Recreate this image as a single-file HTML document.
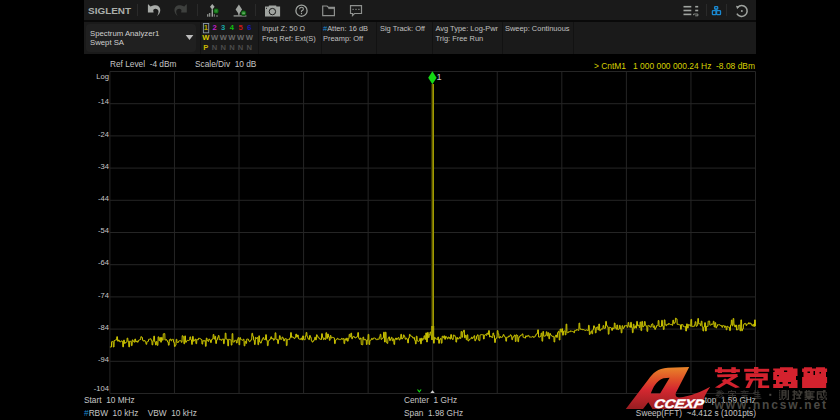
<!DOCTYPE html>
<html><head><meta charset="utf-8">
<style>
*{margin:0;padding:0;box-sizing:border-box}
html,body{width:840px;height:420px;background:#000;overflow:hidden;font-family:"Liberation Sans",sans-serif;position:relative}
.a{position:absolute;white-space:nowrap}
#top{position:absolute;left:84px;top:0;width:672px;height:20px;background:#1a1a1a}
#gap{position:absolute;left:84px;top:20px;width:672px;height:2px;background:#090909}
#row2{position:absolute;left:84px;top:22px;width:672px;height:32px;background:#1a1a1a}
#dd{position:absolute;left:85.5px;top:24px;width:110.5px;height:27.6px;background:#202020;border-radius:4px}
.sep{position:absolute;top:4px;width:1px;height:12px;background:#2a2a2a}
.col{position:absolute;top:22px;width:1px;height:31.5px;background:#121212}
.t8{font-size:7.75px;color:#cfcfcf;line-height:9px}
.i7{font-size:7.45px;color:#c0c0c0;line-height:10.1px}
.dg{font-size:7.6px;font-weight:bold;line-height:9.9px;height:9.9px;width:8.7px;text-align:center;display:inline-block;vertical-align:top}
.dr{height:9.9px;line-height:9.9px}
.yl{font-size:7.6px;color:#c8c8c8;text-align:right;width:30px}
.bt{font-size:8.3px;color:#c6c6c6;line-height:10px}
.mk{font-size:8.45px;color:#d4cf00;line-height:10px}
</style></head><body>
<div id="top"></div><div id="gap"></div>
<div class="sep" style="left:137px"></div>
<div class="sep" style="left:197px"></div>
<div class="sep" style="left:255px"></div>
<div class="sep" style="left:706px"></div>
<div class="sep" style="left:726px"></div>
<div id="row2"></div>
<div id="dd"></div>
<div class="col" style="left:200px"></div>
<div class="col" style="left:258px"></div>
<div class="col" style="left:321px"></div>
<div class="col" style="left:376px"></div>
<div class="col" style="left:432px"></div>
<div class="col" style="left:502px"></div>
<div class="col" style="left:573px"></div>

<!-- logo -->
<div class="a" style="left:88.4px;top:4.5px;font-size:9.3px;line-height:12px;font-weight:bold;color:#aaaeaa;transform:scaleX(1.07);transform-origin:0 0">SIGLENT</div>

<svg class="a" style="left:0;top:0" width="840" height="420" viewBox="0 0 840 420">
 <!-- undo -->
 <path fill="#a8aba8" d="M148.3 4.3 L150.4 6.4 C152.5 5.5 154.5 5.1 156 5.2 C158.8 5.5 160.4 7.8 160.3 10.3 C160.2 12.5 159 14.5 157.1 16.2 C158.1 14.2 158.8 12.2 158.4 10.8 C157.9 9.4 156.6 8.7 155.2 8.8 C154.3 8.9 153.6 9.4 153.2 10.1 L153.6 12.6 L147.9 12.6 L147.9 4.8 Z"/>
 <!-- redo -->
 <g transform="translate(334.7,0) scale(-1,1)"><path fill="#3e403e" d="M148.3 4.3 L150.4 6.4 C152.5 5.5 154.5 5.1 156 5.2 C158.8 5.5 160.4 7.8 160.3 10.3 C160.2 12.5 159 14.5 157.1 16.2 C158.1 14.2 158.8 12.2 158.4 10.8 C157.9 9.4 156.6 8.7 155.2 8.8 C154.3 8.9 153.6 9.4 153.2 10.1 L153.6 12.6 L147.9 12.6 L147.9 4.8 Z"/></g>
 <!-- peak icon 1 -->
 <path d="M212.3 3.9 L214.6 6.75 L212.3 9.7 L210 6.75 Z" fill="#a8aca8"/>
 <rect x="211.6" y="9.3" width="1.4" height="7.4" fill="#a0a4a0"/>
 <rect x="207" y="14.2" width="1.4" height="2.5" fill="#8a8e8a"/>
 <rect x="208.9" y="13" width="1.4" height="3.7" fill="#8a8e8a"/>
 <rect x="213.8" y="14.2" width="1.1" height="2.5" fill="#7a7e7a"/>
 <rect x="216" y="15.3" width="2" height="1.4" fill="#6a6e6a"/>
 <circle cx="216.1" cy="10.95" r="2.9" fill="#0e3a0e"/>
 <circle cx="216.1" cy="10.95" r="2.3" fill="#1a7a1e"/>
 <circle cx="216.1" cy="10.95" r="0.9" fill="#3a9a3e"/>
 <!-- peak icon 2 -->
 <path d="M238.9 4.6 L242.1 9.4 L238.9 14.3 L235.6 9.4 Z" fill="#a0a4a0"/>
 <rect x="238.3" y="13" width="1.2" height="2.5" fill="#a0a4a0"/>
 <rect x="233.6" y="15.2" width="12.8" height="1.4" fill="#8a8e8a"/>
 <circle cx="243.6" cy="13.1" r="2.9" fill="#0e3a0e"/><circle cx="243.6" cy="13.1" r="2.3" fill="#1a7a1e"/>
 <rect x="242.3" y="12.7" width="2.6" height="0.8" fill="#a8d8a8"/>
 <!-- camera -->
 <path d="M265 6.6 L268.7 6.6 L268.9 5.4 L276.2 5.4 L276.4 6.6 L280.1 6.6 L280.1 16.6 L265 16.6 Z" fill="#a0a4a0"/>
 <circle cx="272.4" cy="11.6" r="3.2" fill="none" stroke="#1b1b1b" stroke-width="1"/>
 <rect x="266" y="7.8" width="1" height="1" fill="#1b1b1b"/>
 <!-- help -->
 <circle cx="301.5" cy="10.7" r="5.6" fill="none" stroke="#a0a4a0" stroke-width="1.3"/>
 <path d="M299.6 9.2 Q299.6 7.3 301.5 7.3 Q303.4 7.3 303.4 9 Q303.4 10.2 301.5 10.9 L301.5 12.3" fill="none" stroke="#a0a4a0" stroke-width="1.1"/>
 <rect x="300.9" y="13" width="1.2" height="1.2" fill="#a0a4a0"/>
 <!-- folder -->
 <path d="M322.7 6 L327 6 L328.5 7.4 L334.4 7.4 L334.4 15.7 L322.7 15.7 Z" fill="none" stroke="#8e908e" stroke-width="1.2"/>
 <path d="M328.3 8.6 L334.4 8.6" stroke="#8e908e" stroke-width="1"/>
 <!-- chat -->
 <path d="M350.5 5.7 L361.5 5.7 L361.5 13.5 L354.5 13.5 L352.5 15.5 L352.5 13.5 L350.5 13.5 Z" fill="none" stroke="#8e908e" stroke-width="1.2"/>
 <rect x="352.5" y="8.8" width="1.2" height="1.2" fill="#8e908e"/>
 <rect x="355.4" y="8.8" width="1.2" height="1.2" fill="#8e908e"/>
 <rect x="358.3" y="8.8" width="1.2" height="1.2" fill="#8e908e"/>
 <!-- list icon -->
 <rect x="683.5" y="5.9" width="7.8" height="1.6" fill="#a0a4a0"/>
 <rect x="683.5" y="9.7" width="7.8" height="1.6" fill="#a0a4a0"/>
 <rect x="683.5" y="13.6" width="7.8" height="1.6" fill="#a0a4a0"/>
 <rect x="695.2" y="5.9" width="3" height="1.6" fill="#a0a4a0"/>
 <rect x="695.2" y="9.7" width="3" height="1.6" fill="#a0a4a0"/>
 <path d="M693.6 15.2 L693.6 14 L697.9 14 L697.9 15.8 L695.2 15.8" fill="none" stroke="#a0a4a0" stroke-width="0.8"/>
 <!-- network -->
 <rect x="714.6" y="6.6" width="3.1" height="2.4" rx="0.6" fill="none" stroke="#1a88d0" stroke-width="1.3"/>
 <path d="M716.15 9 L716.15 10.8" stroke="#1a88d0" stroke-width="1.3"/>
 <rect x="712.4" y="10.7" width="3.6" height="4" rx="0.6" fill="none" stroke="#1a88d0" stroke-width="1.3"/>
 <rect x="716.6" y="10.7" width="3.9" height="4" rx="0.6" fill="none" stroke="#1a88d0" stroke-width="1.3"/>
 <!-- refresh -->
 <path d="M736.9 13.6 A5.45 5.45 0 1 0 737.6 7.4" fill="none" stroke="#a0a4a0" stroke-width="1.5"/>
 <path d="M736 5.8 L739.2 6.6 L737.2 9.2 Z" fill="#a0a4a0"/>
 <circle cx="741.85" cy="11" r="0.95" fill="#a0a4a0"/>
 <!-- dropdown triangle -->
 <path d="M185.7 35 L193.3 35 L189.5 40 Z" fill="#bdbdbd"/>
 <!-- trace 1 box -->
 <rect x="203.4" y="23.5" width="5.3" height="9.3" fill="none" stroke="#8a9aa8" stroke-width="0.9"/>

 <!-- graticule -->
 <g stroke="#252525" stroke-width="1">
 <line x1="109.90" y1="71.5" x2="109.90" y2="393.5"/>
<line x1="174.46" y1="71.5" x2="174.46" y2="393.5"/>
<line x1="239.02" y1="71.5" x2="239.02" y2="393.5"/>
<line x1="303.58" y1="71.5" x2="303.58" y2="393.5"/>
<line x1="368.14" y1="71.5" x2="368.14" y2="393.5"/>
<line x1="432.70" y1="71.5" x2="432.70" y2="393.5"/>
<line x1="497.26" y1="71.5" x2="497.26" y2="393.5"/>
<line x1="561.82" y1="71.5" x2="561.82" y2="393.5"/>
<line x1="626.38" y1="71.5" x2="626.38" y2="393.5"/>
<line x1="690.94" y1="71.5" x2="690.94" y2="393.5"/>
<line x1="755.50" y1="71.5" x2="755.50" y2="393.5"/>
<line x1="109.9" y1="71.50" x2="755.5" y2="71.50"/>
<line x1="109.9" y1="103.70" x2="755.5" y2="103.70"/>
<line x1="109.9" y1="135.90" x2="755.5" y2="135.90"/>
<line x1="109.9" y1="168.10" x2="755.5" y2="168.10"/>
<line x1="109.9" y1="200.30" x2="755.5" y2="200.30"/>
<line x1="109.9" y1="232.50" x2="755.5" y2="232.50"/>
<line x1="109.9" y1="264.70" x2="755.5" y2="264.70"/>
<line x1="109.9" y1="296.90" x2="755.5" y2="296.90"/>
<line x1="109.9" y1="329.10" x2="755.5" y2="329.10"/>
<line x1="109.9" y1="361.30" x2="755.5" y2="361.30"/>
<line x1="109.9" y1="393.50" x2="755.5" y2="393.50"/>
 </g>
 <path d="M109.90 347.0L110.56 347.0L110.76 347.0L111.42 347.0L111.62 341.7L112.28 341.7L112.48 341.4L113.14 341.4L113.34 347.0L114.00 347.0L114.20 340.5L114.86 340.5L115.06 340.0L115.73 340.0L115.93 340.0L116.59 340.0L116.79 336.7L117.45 336.7L117.65 341.2L118.31 341.2L118.51 340.0L119.17 340.0L119.37 341.6L120.03 341.6L120.23 341.9L120.89 341.9L121.09 340.9L121.75 340.9L121.95 341.3L122.61 341.3L122.81 346.9L123.47 346.9L123.67 340.1L124.33 340.1L124.53 343.5L125.19 343.5L125.39 342.5L126.06 342.5L126.26 342.2L126.92 342.2L127.12 338.1L127.78 338.1L127.98 341.3L128.64 341.3L128.84 346.9L129.50 346.9L129.70 341.1L130.36 341.1L130.56 341.4L131.22 341.4L131.42 345.6L132.08 345.6L132.28 339.9L132.94 339.9L133.14 341.3L133.80 341.3L134.00 342.2L134.66 342.2L134.86 339.0L135.52 339.0L135.72 341.9L136.38 341.9L136.58 341.0L137.25 341.0L137.45 342.2L138.11 342.2L138.31 340.4L138.97 340.4L139.17 339.9L139.83 339.9L140.03 339.5L140.69 339.5L140.89 336.7L141.55 336.7L141.75 337.5L142.41 337.5L142.61 340.3L143.27 340.3L143.47 341.1L144.13 341.1L144.33 340.5L144.99 340.5L145.19 341.8L145.85 341.8L146.05 344.3L146.71 344.3L146.91 341.7L147.58 341.7L147.78 341.3L148.44 341.3L148.64 339.3L149.30 339.3L149.50 339.2L150.16 339.2L150.36 338.8L151.02 338.8L151.22 340.4L151.88 340.4L152.08 344.9L152.74 344.9L152.94 340.8L153.60 340.8L153.80 336.1L154.46 336.1L154.66 341.8L155.32 341.8L155.52 344.9L156.18 344.9L156.38 341.5L157.04 341.5L157.24 345.4L157.90 345.4L158.10 336.8L158.77 336.8L158.97 340.7L159.63 340.7L159.83 337.5L160.49 337.5L160.69 342.2L161.35 342.2L161.55 337.4L162.21 337.4L162.41 340.2L163.07 340.2L163.27 333.8L163.93 333.8L164.13 333.6L164.79 333.6L164.99 340.1L165.65 340.1L165.85 339.5L166.51 339.5L166.71 340.5L167.37 340.5L167.57 342.0L168.23 342.0L168.43 345.2L169.10 345.2L169.30 339.9L169.96 339.9L170.16 339.0L170.82 339.0L171.02 340.9L171.68 340.9L171.88 339.4L172.54 339.4L172.74 339.3L173.40 339.3L173.60 342.3L174.26 342.3L174.46 346.5L175.12 346.5L175.32 345.2L175.98 345.2L176.18 339.3L176.84 339.3L177.04 342.5L177.70 342.5L177.90 342.3L178.56 342.3L178.76 341.0L179.42 341.0L179.62 340.6L180.29 340.6L180.49 340.7L181.15 340.7L181.35 342.3L182.01 342.3L182.21 335.7L182.87 335.7L183.07 336.8L183.73 336.8L183.93 343.8L184.59 343.8L184.79 335.9L185.45 335.9L185.65 342.3L186.31 342.3L186.51 341.0L187.17 341.0L187.37 340.3L188.03 340.3L188.23 340.6L188.89 340.6L189.09 339.9L189.75 339.9L189.95 336.9L190.62 336.9L190.82 339.9L191.48 339.9L191.68 344.4L192.34 344.4L192.54 336.4L193.20 336.4L193.40 341.2L194.06 341.2L194.26 340.4L194.92 340.4L195.12 339.1L195.78 339.1L195.98 343.7L196.64 343.7L196.84 339.4L197.50 339.4L197.70 339.8L198.36 339.8L198.56 338.2L199.22 338.2L199.42 338.4L200.08 338.4L200.28 338.9L200.94 338.9L201.14 339.5L201.81 339.5L202.01 344.1L202.67 344.1L202.87 340.6L203.53 340.6L203.73 341.2L204.39 341.2L204.59 340.5L205.25 340.5L205.45 346.3L206.11 346.3L206.31 338.1L206.97 338.1L207.17 340.5L207.83 340.5L208.03 341.4L208.69 341.4L208.89 339.1L209.55 339.1L209.75 340.1L210.41 340.1L210.61 342.6L211.27 342.6L211.47 339.7L212.14 339.7L212.34 338.9L213.00 338.9L213.20 334.5L213.86 334.5L214.06 339.1L214.72 339.1L214.92 336.3L215.58 336.3L215.78 343.5L216.44 343.5L216.64 340.0L217.30 340.0L217.50 337.7L218.16 337.7L218.36 335.5L219.02 335.5L219.22 339.7L219.88 339.7L220.08 339.3L220.74 339.3L220.94 340.3L221.60 340.3L221.80 339.4L222.46 339.4L222.66 338.9L223.33 338.9L223.53 343.7L224.19 343.7L224.39 339.4L225.05 339.4L225.25 333.1L225.91 333.1L226.11 339.1L226.77 339.1L226.97 339.4L227.63 339.4L227.83 345.9L228.49 345.9L228.69 339.2L229.35 339.2L229.55 339.6L230.21 339.6L230.41 339.8L231.07 339.8L231.27 345.1L231.93 345.1L232.13 333.6L232.79 333.6L232.99 342.1L233.66 342.1L233.86 341.8L234.52 341.8L234.72 340.3L235.38 340.3L235.58 340.4L236.24 340.4L236.44 343.0L237.10 343.0L237.30 339.6L237.96 339.6L238.16 337.6L238.82 337.6L239.02 344.8L239.68 344.8L239.88 337.7L240.54 337.7L240.74 339.6L241.40 339.6L241.60 339.9L242.26 339.9L242.46 340.3L243.12 340.3L243.32 339.2L243.98 339.2L244.18 345.9L244.85 345.9L245.05 341.3L245.71 341.3L245.91 343.4L246.57 343.4L246.77 339.0L247.43 339.0L247.63 339.0L248.29 339.0L248.49 340.5L249.15 340.5L249.35 341.7L250.01 341.7L250.21 340.8L250.87 340.8L251.07 339.5L251.73 339.5L251.93 333.3L252.59 333.3L252.79 336.3L253.45 336.3L253.65 340.2L254.31 340.2L254.51 344.5L255.18 344.5L255.38 337.4L256.04 337.4L256.24 338.5L256.90 338.5L257.10 337.5L257.76 337.5L257.96 344.7L258.62 344.7L258.82 335.8L259.48 335.8L259.68 342.0L260.34 342.0L260.54 343.1L261.20 343.1L261.40 340.9L262.06 340.9L262.26 338.9L262.92 338.9L263.12 337.6L263.78 337.6L263.98 339.5L264.64 339.5L264.84 339.7L265.50 339.7L265.70 334.7L266.37 334.7L266.57 340.3L267.23 340.3L267.43 345.7L268.09 345.7L268.29 341.1L268.95 341.1L269.15 339.9L269.81 339.9L270.01 339.0L270.67 339.0L270.87 336.8L271.53 336.8L271.73 338.9L272.39 338.9L272.59 338.4L273.25 338.4L273.45 340.2L274.11 340.2L274.31 339.0L274.97 339.0L275.17 332.8L275.83 332.8L276.03 339.6L276.70 339.6L276.90 339.3L277.56 339.3L277.76 343.6L278.42 343.6L278.62 339.7L279.28 339.7L279.48 335.7L280.14 335.7L280.34 339.2L281.00 339.2L281.20 339.3L281.86 339.3L282.06 337.1L282.72 337.1L282.92 338.2L283.58 338.2L283.78 340.9L284.44 340.9L284.64 339.0L285.30 339.0L285.50 338.6L286.16 338.6L286.36 345.6L287.02 345.6L287.22 339.6L287.89 339.6L288.09 339.4L288.75 339.4L288.95 339.6L289.61 339.6L289.81 337.8L290.47 337.8L290.67 332.6L291.33 332.6L291.53 337.3L292.19 337.3L292.39 336.9L293.05 336.9L293.25 337.5L293.91 337.5L294.11 338.6L294.77 338.6L294.97 337.6L295.63 337.6L295.83 334.1L296.49 334.1L296.69 337.1L297.35 337.1L297.55 335.0L298.22 335.0L298.42 338.6L299.08 338.6L299.28 339.2L299.94 339.2L300.14 339.4L300.80 339.4L301.00 338.0L301.66 338.0L301.86 340.0L302.52 340.0L302.72 335.9L303.38 335.9L303.58 339.4L304.24 339.4L304.44 339.8L305.10 339.8L305.30 336.0L305.96 336.0L306.16 332.5L306.82 332.5L307.02 336.6L307.68 336.6L307.88 338.5L308.54 338.5L308.74 339.6L309.41 339.6L309.61 335.5L310.27 335.5L310.47 337.4L311.13 337.4L311.33 340.7L311.99 340.7L312.19 342.1L312.85 342.1L313.05 341.1L313.71 341.1L313.91 339.9L314.57 339.9L314.77 337.2L315.43 337.2L315.63 339.9L316.29 339.9L316.49 334.8L317.15 334.8L317.35 336.3L318.01 336.3L318.21 337.9L318.87 337.9L319.07 338.2L319.74 338.2L319.94 339.4L320.60 339.4L320.80 339.5L321.46 339.5L321.66 333.7L322.32 333.7L322.52 337.4L323.18 337.4L323.38 339.6L324.04 339.6L324.24 338.2L324.90 338.2L325.10 339.4L325.76 339.4L325.96 332.7L326.62 332.7L326.82 338.4L327.48 338.4L327.68 334.0L328.34 334.0L328.54 337.0L329.20 337.0L329.40 340.3L330.06 340.3L330.26 335.5L330.93 335.5L331.13 338.1L331.79 338.1L331.99 337.3L332.65 337.3L332.85 337.5L333.51 337.5L333.71 337.9L334.37 337.9L334.57 343.6L335.23 343.6L335.43 340.1L336.09 340.1L336.29 339.6L336.95 339.6L337.15 338.3L337.81 338.3L338.01 339.2L338.67 339.2L338.87 339.3L339.53 339.3L339.73 339.7L340.39 339.7L340.59 339.4L341.26 339.4L341.46 338.4L342.12 338.4L342.32 339.2L342.98 339.2L343.18 338.6L343.84 338.6L344.04 343.6L344.70 343.6L344.90 338.8L345.56 338.8L345.76 340.3L346.42 340.3L346.62 338.1L347.28 338.1L347.48 341.2L348.14 341.2L348.34 338.6L349.00 338.6L349.20 334.3L349.86 334.3L350.06 336.9L350.72 336.9L350.92 333.1L351.58 333.1L351.78 338.8L352.45 338.8L352.65 336.9L353.31 336.9L353.51 336.4L354.17 336.4L354.37 337.4L355.03 337.4L355.23 338.0L355.89 338.0L356.09 337.2L356.75 337.2L356.95 336.6L357.61 336.6L357.81 332.6L358.47 332.6L358.67 338.2L359.33 338.2L359.53 339.4L360.19 339.4L360.39 338.0L361.05 338.0L361.25 344.5L361.91 344.5L362.11 344.8L362.78 344.8L362.98 337.1L363.64 337.1L363.84 339.9L364.50 339.9L364.70 339.3L365.36 339.3L365.56 340.0L366.22 340.0L366.42 344.5L367.08 344.5L367.28 339.9L367.94 339.9L368.14 334.4L368.80 334.4L369.00 344.5L369.66 344.5L369.86 340.4L370.52 340.4L370.72 339.8L371.38 339.8L371.58 338.4L372.24 338.4L372.44 339.4L373.10 339.4L373.30 338.1L373.97 338.1L374.17 338.0L374.83 338.0L375.03 338.4L375.69 338.4L375.89 339.6L376.55 339.6L376.75 339.7L377.41 339.7L377.61 338.9L378.27 338.9L378.47 339.3L379.13 339.3L379.33 337.0L379.99 337.0L380.19 334.3L380.85 334.3L381.05 339.4L381.71 339.4L381.91 338.5L382.57 338.5L382.77 337.8L383.43 337.8L383.63 332.2L384.30 332.2L384.50 342.0L385.16 342.0L385.36 332.2L386.02 332.2L386.22 342.3L386.88 342.3L387.08 343.4L387.74 343.4L387.94 338.4L388.60 338.4L388.80 336.9L389.46 336.9L389.66 340.6L390.32 340.6L390.52 338.9L391.18 338.9L391.38 337.3L392.04 337.3L392.24 340.8L392.90 340.8L393.10 338.8L393.76 338.8L393.96 344.4L394.62 344.4L394.82 339.3L395.49 339.3L395.69 338.0L396.35 338.0L396.55 339.6L397.21 339.6L397.41 338.4L398.07 338.4L398.27 337.6L398.93 337.6L399.13 340.0L399.79 340.0L399.99 338.8L400.65 338.8L400.85 334.3L401.51 334.3L401.71 339.0L402.37 339.0L402.57 338.0L403.23 338.0L403.43 334.9L404.09 334.9L404.29 336.5L404.95 336.5L405.15 339.2L405.82 339.2L406.02 338.2L406.68 338.2L406.88 339.4L407.54 339.4L407.74 342.9L408.40 342.9L408.60 338.0L409.26 338.0L409.46 334.4L410.12 334.4L410.32 336.0L410.98 336.0L411.18 336.1L411.84 336.1L412.04 337.0L412.70 337.0L412.90 338.2L413.56 338.2L413.76 337.5L414.42 337.5L414.62 340.3L415.28 340.3L415.48 343.9L416.14 343.9L416.34 336.2L417.01 336.2L417.21 340.9L417.87 340.9L418.07 341.3L418.73 341.3L418.93 340.8L419.59 340.8L419.79 338.4L420.45 338.4L420.65 343.8L421.31 343.8L421.51 338.2L422.17 338.2L422.37 340.2L423.03 340.2L423.23 338.5L423.89 338.5L424.09 335.8L424.75 335.8L424.95 339.4L425.61 339.4L425.81 332.9L426.47 332.9L426.67 342.0L427.34 342.0L427.54 332.4L428.20 332.4L428.40 337.6L429.06 337.6L429.26 334.5L429.92 334.5L430.12 332.0L430.78 332.0L430.98 335.7L431.64 335.7L431.84 339.6L432.50 339.6L432.70 336.9L433.36 336.9L433.56 343.2L434.22 343.2L434.42 337.3L435.08 337.3L435.28 338.8L435.94 338.8L436.14 338.9L436.80 338.9L437.00 339.6L437.66 339.6L437.86 337.1L438.53 337.1L438.73 343.3L439.39 343.3L439.59 339.6L440.25 339.6L440.45 338.4L441.11 338.4L441.31 343.2L441.97 343.2L442.17 336.2L442.83 336.2L443.03 337.8L443.69 337.8L443.89 335.8L444.55 335.8L444.75 339.3L445.41 339.3L445.61 336.4L446.27 336.4L446.47 337.4L447.13 337.4L447.33 338.9L447.99 338.9L448.19 337.0L448.86 337.0L449.06 337.6L449.72 337.6L449.92 339.1L450.58 339.1L450.78 334.6L451.44 334.6L451.64 338.4L452.30 338.4L452.50 339.5L453.16 339.5L453.36 335.0L454.02 335.0L454.22 335.3L454.88 335.3L455.08 336.9L455.74 336.9L455.94 342.1L456.60 342.1L456.80 337.5L457.46 337.5L457.66 339.1L458.32 339.1L458.52 338.6L459.18 338.6L459.38 337.1L460.05 337.1L460.25 338.4L460.91 338.4L461.11 331.4L461.77 331.4L461.97 337.2L462.63 337.2L462.83 331.8L463.49 331.8L463.69 330.2L464.35 330.2L464.55 337.8L465.21 337.8L465.41 335.3L466.07 335.3L466.27 339.7L466.93 339.7L467.13 334.8L467.79 334.8L467.99 341.0L468.65 341.0L468.85 339.9L469.51 339.9L469.71 339.0L470.38 339.0L470.58 338.8L471.24 338.8L471.44 337.2L472.10 337.2L472.30 338.5L472.96 338.5L473.16 337.2L473.82 337.2L474.02 335.7L474.68 335.7L474.88 340.8L475.54 340.8L475.74 339.1L476.40 339.1L476.60 336.1L477.26 336.1L477.46 334.8L478.12 334.8L478.32 339.7L478.98 339.7L479.18 340.7L479.84 340.7L480.04 334.9L480.70 334.9L480.90 334.6L481.57 334.6L481.77 334.9L482.43 334.9L482.63 334.6L483.29 334.6L483.49 339.0L484.15 339.0L484.35 335.3L485.01 335.3L485.21 334.6L485.87 334.6L486.07 335.4L486.73 335.4L486.93 333.1L487.59 333.1L487.79 334.5L488.45 334.5L488.65 330.6L489.31 330.6L489.51 337.0L490.17 337.0L490.37 336.0L491.03 336.0L491.23 337.0L491.90 337.0L492.10 337.6L492.76 337.6L492.96 333.0L493.62 333.0L493.82 335.5L494.48 335.5L494.68 342.5L495.34 342.5L495.54 338.8L496.20 338.8L496.40 337.8L497.06 337.8L497.26 330.6L497.92 330.6L498.12 333.8L498.78 333.8L498.98 338.1L499.64 338.1L499.84 336.5L500.50 336.5L500.70 337.5L501.36 337.5L501.56 337.4L502.22 337.4L502.42 336.2L503.09 336.2L503.29 334.6L503.95 334.6L504.15 336.3L504.81 336.3L505.01 337.4L505.67 337.4L505.87 341.2L506.53 341.2L506.73 337.2L507.39 337.2L507.59 337.3L508.25 337.3L508.45 336.1L509.11 336.1L509.31 336.4L509.97 336.4L510.17 334.8L510.83 334.8L511.03 335.8L511.69 335.8L511.89 339.7L512.55 339.7L512.75 337.3L513.42 337.3L513.62 336.3L514.28 336.3L514.48 335.0L515.14 335.0L515.34 341.5L516.00 341.5L516.20 334.8L516.86 334.8L517.06 335.5L517.72 335.5L517.92 341.7L518.58 341.7L518.78 337.4L519.44 337.4L519.64 336.2L520.30 336.2L520.50 335.4L521.16 335.4L521.36 335.1L522.02 335.1L522.22 333.9L522.88 333.9L523.08 337.3L523.74 337.3L523.94 337.6L524.61 337.6L524.81 338.1L525.47 338.1L525.67 335.8L526.33 335.8L526.53 336.7L527.19 336.7L527.39 335.8L528.05 335.8L528.25 335.4L528.91 335.4L529.11 337.0L529.77 337.0L529.97 337.0L530.63 337.0L530.83 337.2L531.49 337.2L531.69 336.9L532.35 336.9L532.55 336.4L533.21 336.4L533.41 337.3L534.07 337.3L534.27 337.0L534.94 337.0L535.14 335.7L535.80 335.7L536.00 334.2L536.66 334.2L536.86 333.6L537.52 333.6L537.72 329.8L538.38 329.8L538.58 337.0L539.24 337.0L539.44 337.1L540.10 337.1L540.30 336.2L540.96 336.2L541.16 333.1L541.82 333.1L542.02 341.2L542.68 341.2L542.88 331.5L543.54 331.5L543.74 336.2L544.40 336.2L544.60 336.2L545.26 336.2L545.46 335.3L546.13 335.3L546.33 331.8L546.99 331.8L547.19 336.0L547.85 336.0L548.05 332.7L548.71 332.7L548.91 338.8L549.57 338.8L549.77 333.5L550.43 333.5L550.63 335.1L551.29 335.1L551.49 335.8L552.15 335.8L552.35 336.6L553.01 336.6L553.21 336.3L553.87 336.3L554.07 342.0L554.73 342.0L554.93 336.7L555.59 336.7L555.79 335.0L556.46 335.0L556.66 337.4L557.32 337.4L557.52 332.7L558.18 332.7L558.38 331.3L559.04 331.3L559.24 340.0L559.90 340.0L560.10 329.1L560.76 329.1L560.96 332.1L561.62 332.1L561.82 328.7L562.48 328.7L562.68 335.2L563.34 335.2L563.54 331.2L564.20 331.2L564.40 330.9L565.06 330.9L565.26 334.9L565.92 334.9L566.12 324.1L566.78 324.1L566.98 332.7L567.65 332.7L567.85 332.5L568.51 332.5L568.71 331.6L569.37 331.6L569.57 331.9L570.23 331.9L570.43 330.9L571.09 330.9L571.29 331.2L571.95 331.2L572.15 331.5L572.81 331.5L573.01 331.7L573.67 331.7L573.87 332.7L574.53 332.7L574.73 330.3L575.39 330.3L575.59 330.6L576.25 330.6L576.45 329.6L577.11 329.6L577.31 329.8L577.98 329.8L578.18 330.4L578.84 330.4L579.04 323.1L579.70 323.1L579.90 328.7L580.56 328.7L580.76 329.5L581.42 329.5L581.62 329.1L582.28 329.1L582.48 329.8L583.14 329.8L583.34 329.6L584.00 329.6L584.20 330.1L584.86 330.1L585.06 330.4L585.72 330.4L585.92 329.9L586.58 329.9L586.78 330.0L587.44 330.0L587.64 330.6L588.30 330.6L588.50 325.3L589.17 325.3L589.37 334.5L590.03 334.5L590.23 332.8L590.89 332.8L591.09 330.9L591.75 330.9L591.95 333.8L592.61 333.8L592.81 329.7L593.47 329.7L593.67 325.8L594.33 325.8L594.53 327.7L595.19 327.7L595.39 332.9L596.05 332.9L596.25 327.4L596.91 327.4L597.11 326.9L597.77 326.9L597.97 329.9L598.63 329.9L598.83 324.0L599.50 324.0L599.70 330.7L600.36 330.7L600.56 329.6L601.22 329.6L601.42 328.8L602.08 328.8L602.28 328.9L602.94 328.9L603.14 325.6L603.80 325.6L604.00 328.4L604.66 328.4L604.86 328.2L605.52 328.2L605.72 321.4L606.38 321.4L606.58 325.6L607.24 325.6L607.44 326.8L608.10 326.8L608.30 334.2L608.96 334.2L609.16 327.3L609.82 327.3L610.02 327.5L610.69 327.5L610.89 328.1L611.55 328.1L611.75 330.4L612.41 330.4L612.61 327.8L613.27 327.8L613.47 328.8L614.13 328.8L614.33 323.0L614.99 323.0L615.19 327.4L615.85 327.4L616.05 329.2L616.71 329.2L616.91 325.0L617.57 325.0L617.77 329.6L618.43 329.6L618.63 329.0L619.29 329.0L619.49 325.4L620.15 325.4L620.35 328.5L621.02 328.5L621.22 332.9L621.88 332.9L622.08 325.7L622.74 325.7L622.94 328.6L623.60 328.6L623.80 327.3L624.46 327.3L624.66 325.6L625.32 325.6L625.52 325.9L626.18 325.9L626.38 325.4L627.04 325.4L627.24 327.3L627.90 327.3L628.10 322.5L628.76 322.5L628.96 326.1L629.62 326.1L629.82 327.4L630.48 327.4L630.68 322.3L631.34 322.3L631.54 327.5L632.21 327.5L632.41 332.7L633.07 332.7L633.27 324.2L633.93 324.2L634.13 328.2L634.79 328.2L634.99 325.9L635.65 325.9L635.85 328.1L636.51 328.1L636.71 321.4L637.37 321.4L637.57 325.8L638.23 325.8L638.43 325.1L639.09 325.1L639.29 327.6L639.95 327.6L640.15 322.0L640.81 322.0L641.01 330.6L641.67 330.6L641.87 321.4L642.54 321.4L642.74 326.9L643.40 326.9L643.60 326.0L644.26 326.0L644.46 321.5L645.12 321.5L645.32 325.0L645.98 325.0L646.18 326.6L646.84 326.6L647.04 331.4L647.70 331.4L647.90 325.4L648.56 325.4L648.76 325.7L649.42 325.7L649.62 326.6L650.28 326.6L650.48 327.2L651.14 327.2L651.34 324.6L652.00 324.6L652.20 323.8L652.86 323.8L653.06 327.4L653.73 327.4L653.93 325.8L654.59 325.8L654.79 329.4L655.45 329.4L655.65 327.7L656.31 327.7L656.51 325.7L657.17 325.7L657.37 325.6L658.03 325.6L658.23 320.5L658.89 320.5L659.09 326.5L659.75 326.5L659.95 326.8L660.61 326.8L660.81 326.3L661.47 326.3L661.67 320.3L662.33 320.3L662.53 326.0L663.19 326.0L663.39 329.5L664.06 329.5L664.26 319.9L664.92 319.9L665.12 324.8L665.78 324.8L665.98 325.7L666.64 325.7L666.84 324.2L667.50 324.2L667.70 324.7L668.36 324.7L668.56 323.4L669.22 323.4L669.42 324.1L670.08 324.1L670.28 324.6L670.94 324.6L671.14 324.4L671.80 324.4L672.00 325.3L672.66 325.3L672.86 320.2L673.52 320.2L673.72 323.6L674.38 323.6L674.58 322.5L675.25 322.5L675.45 318.2L676.11 318.2L676.31 318.9L676.97 318.9L677.17 324.4L677.83 324.4L678.03 324.3L678.69 324.3L678.89 324.8L679.55 324.8L679.75 324.8L680.41 324.8L680.61 329.3L681.27 329.3L681.47 324.5L682.13 324.5L682.33 324.6L682.99 324.6L683.19 326.6L683.85 326.6L684.05 326.9L684.71 326.9L684.91 326.5L685.58 326.5L685.78 331.0L686.44 331.0L686.64 323.9L687.30 323.9L687.50 328.1L688.16 328.1L688.36 324.6L689.02 324.6L689.22 324.8L689.88 324.8L690.08 326.1L690.74 326.1L690.94 319.4L691.60 319.4L691.80 326.7L692.46 326.7L692.66 326.3L693.32 326.3L693.52 326.6L694.18 326.6L694.38 324.9L695.04 324.9L695.24 321.7L695.90 321.7L696.10 326.3L696.77 326.3L696.97 325.3L697.63 325.3L697.83 318.5L698.49 318.5L698.69 323.8L699.35 323.8L699.55 323.6L700.21 323.6L700.41 325.6L701.07 325.6L701.27 321.2L701.93 321.2L702.13 326.7L702.79 326.7L702.99 331.0L703.65 331.0L703.85 326.9L704.51 326.9L704.71 322.7L705.37 322.7L705.57 331.0L706.23 331.0L706.43 326.3L707.10 326.3L707.30 326.5L707.96 326.5L708.16 321.2L708.82 321.2L709.02 321.1L709.68 321.1L709.88 325.2L710.54 325.2L710.74 324.8L711.40 324.8L711.60 323.9L712.26 323.9L712.46 324.3L713.12 324.3L713.32 321.3L713.98 321.3L714.18 327.0L714.84 327.0L715.04 322.7L715.70 322.7L715.90 327.9L716.56 327.9L716.76 326.2L717.42 326.2L717.62 324.6L718.29 324.6L718.49 324.9L719.15 324.9L719.35 324.7L720.01 324.7L720.21 325.5L720.87 325.5L721.07 325.6L721.73 325.6L721.93 327.3L722.59 327.3L722.79 325.4L723.45 325.4L723.65 325.7L724.31 325.7L724.51 327.4L725.17 327.4L725.37 326.1L726.03 326.1L726.23 329.8L726.89 329.8L727.09 326.3L727.75 326.3L727.95 327.2L728.62 327.2L728.82 327.2L729.48 327.2L729.68 330.6L730.34 330.6L730.54 325.1L731.20 325.1L731.40 320.1L732.06 320.1L732.26 325.9L732.92 325.9L733.12 318.5L733.78 318.5L733.98 324.9L734.64 324.9L734.84 327.0L735.50 327.0L735.70 325.0L736.36 325.0L736.56 330.0L737.22 330.0L737.42 329.7L738.08 329.7L738.28 325.3L738.94 325.3L739.14 325.0L739.81 325.0L740.01 330.8L740.67 330.8L740.87 319.9L741.53 319.9L741.73 330.8L742.39 330.8L742.59 328.9L743.25 328.9L743.45 324.6L744.11 324.6L744.31 323.6L744.97 323.6L745.17 323.4L745.83 323.4L746.03 325.5L746.69 325.5L746.89 324.0L747.55 324.0L747.75 324.0L748.41 324.0L748.61 322.7L749.27 322.7L749.47 323.9L750.14 323.9L750.34 323.1L751.00 323.1L751.20 324.6L751.86 324.6L752.06 325.8L752.72 325.8L752.92 324.3L753.58 324.3L753.78 326.5L754.44 326.5L754.64 319.9L755.30 319.9L755.50 326.2" fill="none" stroke="#ccc400" stroke-width="1.0" stroke-linejoin="miter"/>
 <!-- peak -->
 <rect x="431" y="84" width="1" height="250" fill="#343200"/><rect x="432" y="84" width="1" height="250" fill="#777000"/><rect x="433" y="84" width="1" height="250" fill="#a09a00"/><rect x="431.2" y="326" width="3" height="14" fill="#b0a800"/>
 <path d="M428.2 77.7 L432.4 71.2 L436.6 77.7 L432.4 84.3 Z" fill="#14d814"/>
 <!-- bottom markers -->
 <path d="M417.5 389.5 L419.3 391.8 L421.1 389.5" fill="none" stroke="#14d814" stroke-width="1.2"/>
 <path d="M430.3 393 L432.5 390.3 L434.7 393 Z" fill="#cfcfcf"/>
</svg>

<!-- row 2 texts -->
<div class="a t8" style="left:90px;top:28.8px">Spectrum Analyzer1<br>Swept SA</div>
<div class="a" style="left:201.5px;top:22.8px;line-height:9.9px">
 <div class="dr"><span class="dg" style="color:#b8a800">1</span><span class="dg" style="color:#c020c8">2</span><span class="dg" style="color:#18a8a8">3</span><span class="dg" style="color:#10c010">4</span><span class="dg" style="color:#c81818">5</span><span class="dg" style="color:#1818b8">6</span></div>
 <div class="dr"><span class="dg" style="color:#d8c800">W</span><span class="dg" style="color:#6a6a6a">W</span><span class="dg" style="color:#6a6a6a">W</span><span class="dg" style="color:#6a6a6a">W</span><span class="dg" style="color:#6a6a6a">W</span><span class="dg" style="color:#6a6a6a">W</span></div>
 <div class="dr"><span class="dg" style="color:#c8b800">P</span><span class="dg" style="color:#4a4a4a">N</span><span class="dg" style="color:#4a4a4a">N</span><span class="dg" style="color:#4a4a4a">N</span><span class="dg" style="color:#4a4a4a">N</span><span class="dg" style="color:#4a4a4a">N</span></div>
</div>
<div class="a i7" style="left:262px;top:23.5px">Input Z: 50 &#937;<br>Freq Ref: Ext(S)</div>
<div class="a i7" style="left:323px;top:23.5px"><span style="color:#1a8ad4">#</span>Atten: 16 dB<br>Preamp: Off</div>
<div class="a i7" style="left:380px;top:23.5px">Sig Track: Off</div>
<div class="a i7" style="left:435.5px;top:23.5px">Avg Type: Log-Pwr<br>Trig: Free Run</div>
<div class="a i7" style="left:505px;top:23.5px">Sweep: Continuous</div>

<!-- header texts -->
<div class="a bt" style="left:110px;top:59px">Ref Level&nbsp; -4 dBm</div>
<div class="a bt" style="left:195px;top:59px">Scale/Div&nbsp; 10 dB</div>
<div class="a mk" style="right:85px;top:60.5px">&gt; CntM1&nbsp;&nbsp; 1 000 000 000.24 Hz&nbsp; -8.08 dBm</div>
<div class="a" style="left:436.6px;top:71.6px;font-size:9.2px;line-height:11px;color:#c8ccd0">1</div>

<!-- y labels -->
<div class="a yl" style="left:79px;top:72px">Log</div>
<div class="a yl" style="left:79px;top:97.4px">-14</div>
<div class="a yl" style="left:79px;top:129.6px">-24</div>
<div class="a yl" style="left:79px;top:161.8px">-34</div>
<div class="a yl" style="left:79px;top:194.0px">-44</div>
<div class="a yl" style="left:79px;top:226.2px">-54</div>
<div class="a yl" style="left:79px;top:258.4px">-64</div>
<div class="a yl" style="left:79px;top:290.6px">-74</div>
<div class="a yl" style="left:79px;top:322.8px">-84</div>
<div class="a yl" style="left:79px;top:355.0px">-94</div>
<div class="a yl" style="left:79px;top:384.0px">-104</div>

<!-- bottom texts -->
<div class="a bt" style="left:84px;top:394.8px">Start&nbsp; 10 MHz</div>
<div class="a bt" style="left:84px;top:408.4px"><span style="color:#1a8ad4">#</span>RBW&nbsp; 10 kHz&nbsp;&nbsp;&nbsp; VBW&nbsp; 10 kHz</div>
<div class="a bt" style="left:404px;top:394.8px">Center&nbsp; 1 GHz</div>
<div class="a bt" style="left:404px;top:408.4px">Span&nbsp; 1.98 GHz</div>
<div class="a bt" style="right:84px;top:394.8px">Stop&nbsp; 1.59 GHz</div>
<div class="a bt" style="right:84px;top:408.4px">Sweep(FFT)&nbsp; ~4.412 s (1001pts)</div>

<svg class="a" style="left:0;top:0" width="840" height="420" viewBox="0 0 840 420">
 <defs>
  <linearGradient id="ag" x1="0" y1="367" x2="0" y2="408" gradientUnits="userSpaceOnUse">
   <stop offset="0" stop-color="#e8862a"/>
   <stop offset="0.3" stop-color="#e05028"/>
   <stop offset="0.55" stop-color="#d42830"/>
   <stop offset="1" stop-color="#9a1e22"/>
  </linearGradient>
 </defs>
 <path fill="url(#ag)" fill-rule="evenodd" d="M625.8 409 L648.5 379.3 C653 373.3 657.5 368.3 667.8 367.8 L689.2 367.1 L675.8 393 C675.3 395.5 676 397.3 679 397.5 C690 396.5 702 391.5 710.2 386.7 C707 391.5 704.8 395.5 703.8 399 L702.8 409 L652.5 409 L648.3 402.3 L643 409 Z M650.8 393.6 C653 387.5 656.5 380.5 663.5 378.3 L669.6 377.7 L660.1 393.5 Z"/>
 <!-- chinese red chars -->
 <g fill="#d4222e">
  <!-- 艾 -->
  <rect x="714.9" y="369.2" width="25" height="3"/>
  <rect x="717.8" y="367.2" width="4.2" height="5.8"/>
  <rect x="731.3" y="367.2" width="4.5" height="5.8"/>
  <path d="M717 374.4 L737.5 374 L737.5 376.8 L717.5 377.2 Z"/>
  <path d="M734.3 375 L738.3 376.2 L719.5 388 L714.9 387.5 Z"/>
  <path d="M721.5 381 L725 378.6 L740 387.3 L735.5 388 Z"/>
  <!-- 克 -->
  <rect x="744.2" y="368.8" width="25" height="3"/>
  <rect x="754" y="367" width="4.4" height="6.3"/>
  <path d="M745.6 373.3 H767.8 V380.4 H745.6 Z M749.9 376.9 V378.6 H763.4 V376.9 Z" fill-rule="evenodd"/>
  <path d="M749.5 380 L753.5 380 L749.5 388 L745.5 388 Z"/>
  <rect x="758.4" y="380" width="3.8" height="8"/>
  <rect x="758.4" y="385.4" width="10.8" height="2.6"/>
  <!-- 3rd -->
  <path fill-rule="evenodd" d="M773.2 368.6 H780 V367.2 H793 V368.6 H797.5 V376 H796 V380 H797.5 V387.9 H789 V386.2 H783 V387.9 H773.2 V384 H776 V380 H773.2 V372 H774.6 V370.5 H773.2 Z M784 370.4 H787.2 V372 H784 Z M779.5 382 H782.5 V384 H779.5 Z M788 382 H791 V383.8 H788 Z M777 375 H779 V376.2 H777 Z"/>
  <!-- 4th -->
  <path fill-rule="evenodd" d="M802.1 368.6 H804 V367.2 H812 V368.6 H816 V367.2 H825 V368.6 H827.1 V372 H826 V377 H827.1 V387.9 H802.1 V377 H803.5 V372 H802.1 Z M807.5 371.5 H810 V373 H807.5 Z M813.5 371 H815 V375 H813.5 Z M819.5 372 H821 V373.5 H819.5 Z M826.2 383 H827.1 V387.9 H826.2 Z"/>
 </g>
 <!-- gray chinese subtitle -->
<g fill="#4a4844" opacity="0.75"><rect x="716.60" y="390.20" width="1.00" height="0.95"/><rect x="718.60" y="390.20" width="1.00" height="0.95"/><rect x="720.60" y="390.20" width="1.00" height="0.95"/><rect x="717.60" y="391.15" width="3.00" height="0.95"/><rect x="721.60" y="391.15" width="1.00" height="0.95"/><rect x="716.60" y="392.10" width="5.00" height="0.95"/><rect x="722.60" y="392.10" width="1.00" height="0.95"/><rect x="717.60" y="393.05" width="1.00" height="0.95"/><rect x="719.60" y="393.05" width="1.00" height="0.95"/><rect x="721.60" y="393.05" width="2.00" height="0.95"/><rect x="716.60" y="394.00" width="1.00" height="0.95"/><rect x="718.60" y="394.00" width="1.00" height="0.95"/><rect x="720.60" y="394.00" width="1.00" height="0.95"/><rect x="715.60" y="394.95" width="4.00" height="0.95"/><rect x="721.60" y="394.95" width="1.00" height="0.95"/><rect x="717.60" y="395.90" width="1.00" height="0.95"/><rect x="720.60" y="395.90" width="1.00" height="0.95"/><rect x="722.60" y="395.90" width="1.00" height="0.95"/><rect x="716.60" y="396.85" width="1.00" height="0.95"/><rect x="718.60" y="396.85" width="2.00" height="0.95"/><rect x="722.60" y="396.85" width="1.00" height="0.95"/><rect x="715.60" y="397.80" width="1.00" height="0.95"/><rect x="722.60" y="397.80" width="1.00" height="0.95"/></g>
<g fill="#4a4844" opacity="0.75"><rect x="731.00" y="390.20" width="1.00" height="0.95"/><rect x="728.00" y="391.15" width="8.00" height="0.95"/><rect x="728.00" y="392.10" width="1.00" height="0.95"/><rect x="735.00" y="392.10" width="1.00" height="0.95"/><rect x="730.00" y="393.05" width="4.00" height="0.95"/><rect x="732.00" y="394.00" width="1.00" height="0.95"/><rect x="728.00" y="394.95" width="8.00" height="0.95"/><rect x="732.00" y="395.90" width="1.00" height="0.95"/><rect x="732.00" y="396.85" width="1.00" height="0.95"/><rect x="731.00" y="397.80" width="2.00" height="0.95"/></g>
<g fill="#4a4844" opacity="0.75"><rect x="743.60" y="390.20" width="1.00" height="0.95"/><rect x="740.60" y="391.15" width="8.00" height="0.95"/><rect x="742.60" y="392.10" width="1.00" height="0.95"/><rect x="744.60" y="392.10" width="1.00" height="0.95"/><rect x="741.60" y="393.05" width="1.00" height="0.95"/><rect x="744.60" y="393.05" width="1.00" height="0.95"/><rect x="746.60" y="393.05" width="1.00" height="0.95"/><rect x="741.60" y="394.95" width="6.00" height="0.95"/><rect x="743.60" y="395.90" width="1.00" height="0.95"/><rect x="745.60" y="395.90" width="1.00" height="0.95"/><rect x="744.60" y="396.85" width="1.00" height="0.95"/><rect x="741.60" y="397.80" width="2.00" height="0.95"/><rect x="745.60" y="397.80" width="2.00" height="0.95"/></g>
<g fill="#4a4844" opacity="0.75"><rect x="754.40" y="390.20" width="1.00" height="0.95"/><rect x="757.40" y="390.20" width="1.00" height="0.95"/><rect x="754.40" y="391.15" width="1.00" height="0.95"/><rect x="757.40" y="391.15" width="1.00" height="0.95"/><rect x="753.40" y="392.10" width="6.00" height="0.95"/><rect x="753.40" y="393.05" width="1.00" height="0.95"/><rect x="757.40" y="393.05" width="1.00" height="0.95"/><rect x="754.40" y="394.00" width="6.00" height="0.95"/><rect x="757.40" y="394.95" width="1.00" height="0.95"/><rect x="754.40" y="395.90" width="6.00" height="0.95"/><rect x="757.40" y="396.85" width="1.00" height="0.95"/><rect x="753.40" y="397.80" width="8.00" height="0.95"/></g>
<rect x="769.3" y="393.8" width="2" height="2" fill="#4a4844"/>
<g fill="#524e48" opacity="1.0"><rect x="779.00" y="390.30" width="1.25" height="1.05"/><rect x="781.50" y="390.30" width="5.00" height="1.05"/><rect x="787.75" y="390.30" width="1.25" height="1.05"/><rect x="781.50" y="391.35" width="1.25" height="1.05"/><rect x="785.25" y="391.35" width="1.25" height="1.05"/><rect x="787.75" y="391.35" width="1.25" height="1.05"/><rect x="779.00" y="392.40" width="1.25" height="1.05"/><rect x="781.50" y="392.40" width="5.00" height="1.05"/><rect x="787.75" y="392.40" width="1.25" height="1.05"/><rect x="781.50" y="393.45" width="1.25" height="1.05"/><rect x="785.25" y="393.45" width="1.25" height="1.05"/><rect x="787.75" y="393.45" width="1.25" height="1.05"/><rect x="779.00" y="394.50" width="1.25" height="1.05"/><rect x="781.50" y="394.50" width="5.00" height="1.05"/><rect x="787.75" y="394.50" width="1.25" height="1.05"/><rect x="781.50" y="395.55" width="1.25" height="1.05"/><rect x="785.25" y="395.55" width="1.25" height="1.05"/><rect x="787.75" y="395.55" width="1.25" height="1.05"/><rect x="779.00" y="396.60" width="1.25" height="1.05"/><rect x="781.50" y="396.60" width="1.25" height="1.05"/><rect x="785.25" y="396.60" width="1.25" height="1.05"/><rect x="787.75" y="396.60" width="1.25" height="1.05"/><rect x="781.50" y="397.65" width="1.25" height="1.05"/><rect x="784.00" y="397.65" width="1.25" height="1.05"/><rect x="787.75" y="397.65" width="1.25" height="1.05"/><rect x="779.00" y="398.70" width="2.50" height="1.05"/><rect x="782.75" y="398.70" width="1.25" height="1.05"/><rect x="786.50" y="398.70" width="2.50" height="1.05"/></g>
<g fill="#524e48" opacity="1.0"><rect x="793.65" y="390.30" width="1.25" height="1.05"/><rect x="798.65" y="390.30" width="1.25" height="1.05"/><rect x="792.40" y="391.35" width="5.00" height="1.05"/><rect x="798.65" y="391.35" width="3.75" height="1.05"/><rect x="793.65" y="392.40" width="1.25" height="1.05"/><rect x="796.15" y="392.40" width="1.25" height="1.05"/><rect x="799.90" y="392.40" width="2.50" height="1.05"/><rect x="793.65" y="393.45" width="2.50" height="1.05"/><rect x="797.40" y="393.45" width="1.25" height="1.05"/><rect x="799.90" y="393.45" width="1.25" height="1.05"/><rect x="792.40" y="394.50" width="2.50" height="1.05"/><rect x="796.15" y="394.50" width="5.00" height="1.05"/><rect x="793.65" y="395.55" width="1.25" height="1.05"/><rect x="798.65" y="395.55" width="1.25" height="1.05"/><rect x="793.65" y="396.60" width="1.25" height="1.05"/><rect x="798.65" y="396.60" width="1.25" height="1.05"/><rect x="793.65" y="397.65" width="1.25" height="1.05"/><rect x="796.15" y="397.65" width="5.00" height="1.05"/><rect x="792.40" y="398.70" width="2.50" height="1.05"/></g>
<g fill="#524e48" opacity="1.0"><rect x="805.85" y="390.30" width="1.25" height="1.05"/><rect x="808.35" y="390.30" width="1.25" height="1.05"/><rect x="804.60" y="391.35" width="10.00" height="1.05"/><rect x="804.60" y="392.40" width="2.50" height="1.05"/><rect x="809.60" y="392.40" width="1.25" height="1.05"/><rect x="805.85" y="393.45" width="7.50" height="1.05"/><rect x="804.60" y="394.50" width="2.50" height="1.05"/><rect x="809.60" y="394.50" width="1.25" height="1.05"/><rect x="805.85" y="395.55" width="7.50" height="1.05"/><rect x="804.60" y="396.60" width="10.00" height="1.05"/><rect x="807.10" y="397.65" width="3.75" height="1.05"/><rect x="804.60" y="398.70" width="2.50" height="1.05"/><rect x="808.35" y="398.70" width="1.25" height="1.05"/><rect x="810.85" y="398.70" width="2.50" height="1.05"/></g>
<g fill="#524e48" opacity="1.0"><rect x="823.05" y="390.30" width="2.50" height="1.05"/><rect x="816.80" y="391.35" width="8.75" height="1.05"/><rect x="816.80" y="392.40" width="1.25" height="1.05"/><rect x="823.05" y="392.40" width="1.25" height="1.05"/><rect x="825.55" y="392.40" width="1.25" height="1.05"/><rect x="816.80" y="393.45" width="5.00" height="1.05"/><rect x="823.05" y="393.45" width="1.25" height="1.05"/><rect x="816.80" y="394.50" width="1.25" height="1.05"/><rect x="820.55" y="394.50" width="1.25" height="1.05"/><rect x="823.05" y="394.50" width="1.25" height="1.05"/><rect x="825.55" y="394.50" width="1.25" height="1.05"/><rect x="816.80" y="395.55" width="1.25" height="1.05"/><rect x="820.55" y="395.55" width="1.25" height="1.05"/><rect x="824.30" y="395.55" width="1.25" height="1.05"/><rect x="816.80" y="396.60" width="1.25" height="1.05"/><rect x="819.30" y="396.60" width="3.75" height="1.05"/><rect x="824.30" y="396.60" width="1.25" height="1.05"/><rect x="816.80" y="397.65" width="1.25" height="1.05"/><rect x="823.05" y="397.65" width="1.25" height="1.05"/><rect x="825.55" y="397.65" width="1.25" height="1.05"/><rect x="816.80" y="398.70" width="2.50" height="1.05"/><rect x="820.55" y="398.70" width="2.50" height="1.05"/><rect x="825.55" y="398.70" width="1.25" height="1.05"/></g>
</svg>
<div class="a" style="left:652.5px;top:398.3px;font-size:12.3px;line-height:13px;font-weight:bold;font-style:italic;color:#fff;transform:scaleX(1.16) skewX(-10deg);transform-origin:0 100%;-webkit-text-stroke:0.45px #fff">CCEXP</div>
<div class="a" style="left:714.6px;top:397.7px;font-size:12px;line-height:14px;font-weight:bold;color:#4a4844;letter-spacing:1.85px">www.nncsw.net</div>

</body></html>
